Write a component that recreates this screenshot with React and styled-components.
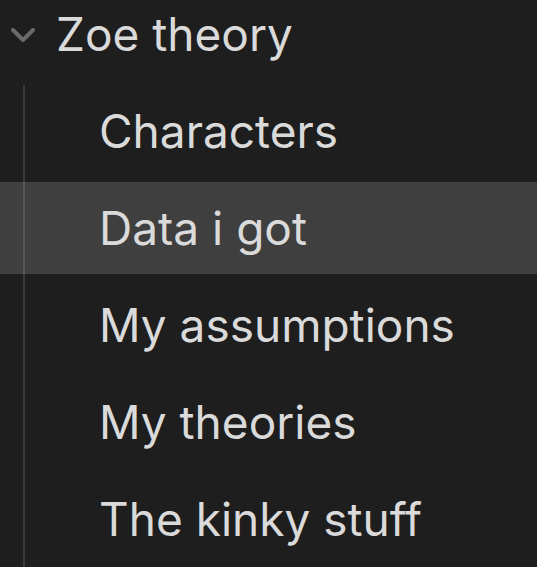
import styled, { createGlobalStyle } from "styled-components";

const GlobalStyle = createGlobalStyle`
  html, body {
    margin: 0;
    padding: 0;
    background: #1e1e1e;
    overflow: hidden;
  }
`;

const Tree = styled.div`
  width: 537px;
  height: 590px;
  margin-top: -12px;
  font-family: Inter, "Noto Sans", sans-serif;
  font-size: 46px;
  color: #dadada;
  display: flex;
  flex-direction: column;
  gap: 5px;
`;

const FolderRow = styled.div`
  height: 92px;
  flex-shrink: 0;
  display: flex;
  align-items: center;
  padding-left: 11px;
  box-sizing: border-box;
`;

const Chevron = styled.svg`
  width: 24px;
  height: 14px;
  margin-top: 2px;
  margin-right: 21px;
  flex-shrink: 0;
`;

const Children = styled.div`
  flex: 1;
  margin-left: 23px;
  border-left: 2px solid #3a3a3a;
  display: flex;
  flex-direction: column;
  gap: 5px;
`;

const FileRow = styled.div`
  height: 92px;
  flex-shrink: 0;
  margin-left: -25px;
  padding-left: 99px;
  display: flex;
  align-items: center;
  box-sizing: border-box;
  background: ${(p) => (p.$active ? "rgba(255, 255, 255, 0.15)" : "transparent")};
`;

const Label = styled.span`
  white-space: nowrap;
  line-height: 1;
`;

const files = ["Characters", "Data i got", "My assumptions", "My theories", "The kinky stuff"];

const App = () => {
  return (
    <>
      <GlobalStyle />
      <Tree>
        <FolderRow>
          <Chevron viewBox="0 0 24 14" fill="none">
            <polyline
              points="2,2 12,12 22,2"
              stroke="#6a6a6a"
              strokeWidth="4"
              strokeLinecap="round"
              strokeLinejoin="round"
            />
          </Chevron>
          <Label>Zoe theory</Label>
        </FolderRow>
        <Children>
          {files.map((name) => (
            <FileRow key={name} $active={name === "Data i got"}>
              <Label>{name}</Label>
            </FileRow>
          ))}
        </Children>
      </Tree>
    </>
  );
};

export default App;
